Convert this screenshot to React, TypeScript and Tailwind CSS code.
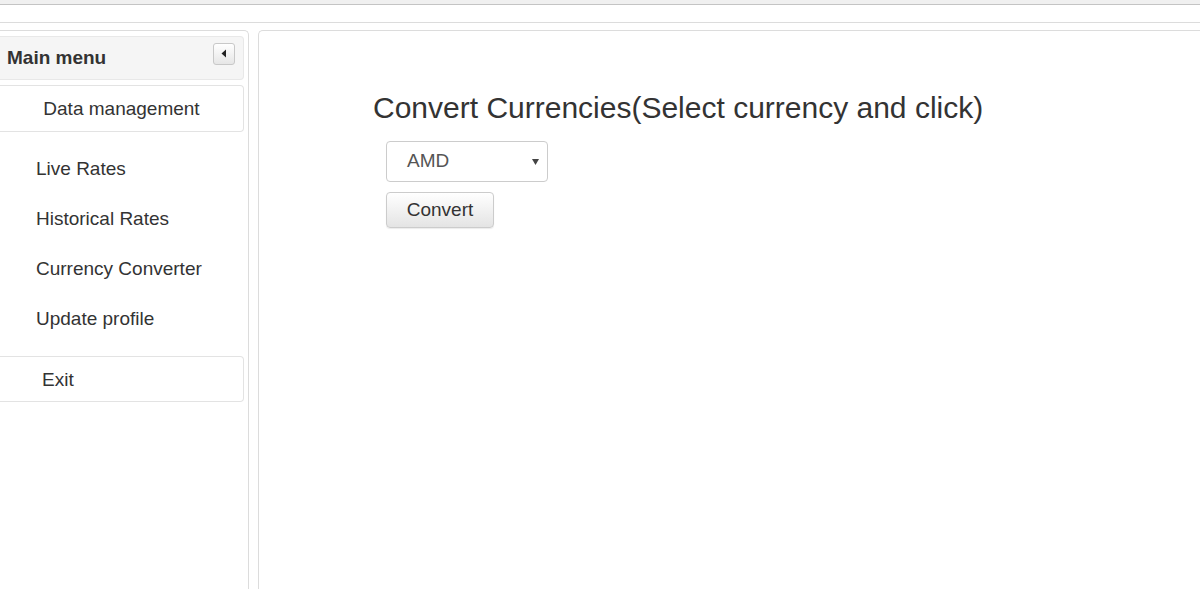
export default function App() {
  const links = ['Live Rates', 'Historical Rates', 'Currency Converter', 'Update profile'];

  return (
    <div className="w-[1200px] h-[589px] overflow-hidden bg-white text-[#333] font-['Liberation_Sans',Arial,sans-serif]">
      {/* top strip */}
      <div className="h-[5px] bg-[#f0f0f0] border-b border-[#c4c4c4]" />
      <div className="h-[18px] border-b border-[#dcdcdc]" />
      <div className="h-[7px]" />

      <div className="flex gap-[9px] h-[560px]">
        {/* sidebar */}
        <aside className="w-[249px] shrink-0 border-t border-r border-[#dcdcdc] rounded-tr-[5px] pt-[5px] pr-[4px]">
          <div className="h-[44px] bg-[#f5f5f5] border border-l-0 border-[#e8e8e8] rounded-r-[4px] flex items-center justify-between pl-[7px] pr-[8px]">
            <span className="text-[19px] font-bold">Main menu</span>
            <button className="w-[22px] h-[22px] -mt-[9px] rounded-[3px] border border-[#c8c8c8] bg-gradient-to-b from-white to-[#e6e6e6] flex items-center justify-center">
              <svg width="6" height="9" viewBox="0 0 6 9">
                <path d="M5 0.5 L0.5 4.5 L5 8.5 Z" fill="#222" />
              </svg>
            </button>
          </div>

          <div className="mt-[5px] h-[47px] pt-[2px] border border-l-0 border-[#e3e3e3] rounded-r-[4px] flex items-center justify-center text-[19px]">
            Data management
          </div>

          <nav className="mt-[12px] flex flex-col">
            {links.map((l) => (
              <a key={l} href="#" className="h-[50px] flex items-center pl-[36px] text-[19px] text-[#333]">
                {l}
              </a>
            ))}
          </nav>

          <div className="mt-[12px] h-[46px] pt-[2px] border border-l-0 border-[#e3e3e3] rounded-r-[4px] flex items-center pl-[42px] text-[19px]">
            Exit
          </div>
        </aside>

        {/* main panel */}
        <main className="flex-1 border-t border-l border-[#dcdcdc] rounded-tl-[5px] pl-[114px] pt-[60px]">
          <h1 className="text-[30px] leading-[34px] font-normal">Convert Currencies(Select currency and click)</h1>
          <div className="ml-[13px] mt-[16px] flex flex-col items-start gap-[10px]">
            <div className="relative w-[162px] h-[41px] border border-[#cccccc] rounded-[4px] bg-white flex items-center pl-[20px] text-[19px] text-[#555]">
              AMD
              <svg className="absolute right-[8px] top-[17px]" width="7" height="6" viewBox="0 0 7 6">
                <path d="M0 0 H7 L3.5 6 Z" fill="#444" />
              </svg>
            </div>
            <button className="w-[108px] h-[36px] border border-[#cccccc] rounded-[4px] bg-gradient-to-b from-white to-[#e4e4e4] text-[19px] text-[#333] shadow-[0_1px_1px_rgba(0,0,0,0.08)]">
              Convert
            </button>
          </div>
        </main>
      </div>
    </div>
  );
}
